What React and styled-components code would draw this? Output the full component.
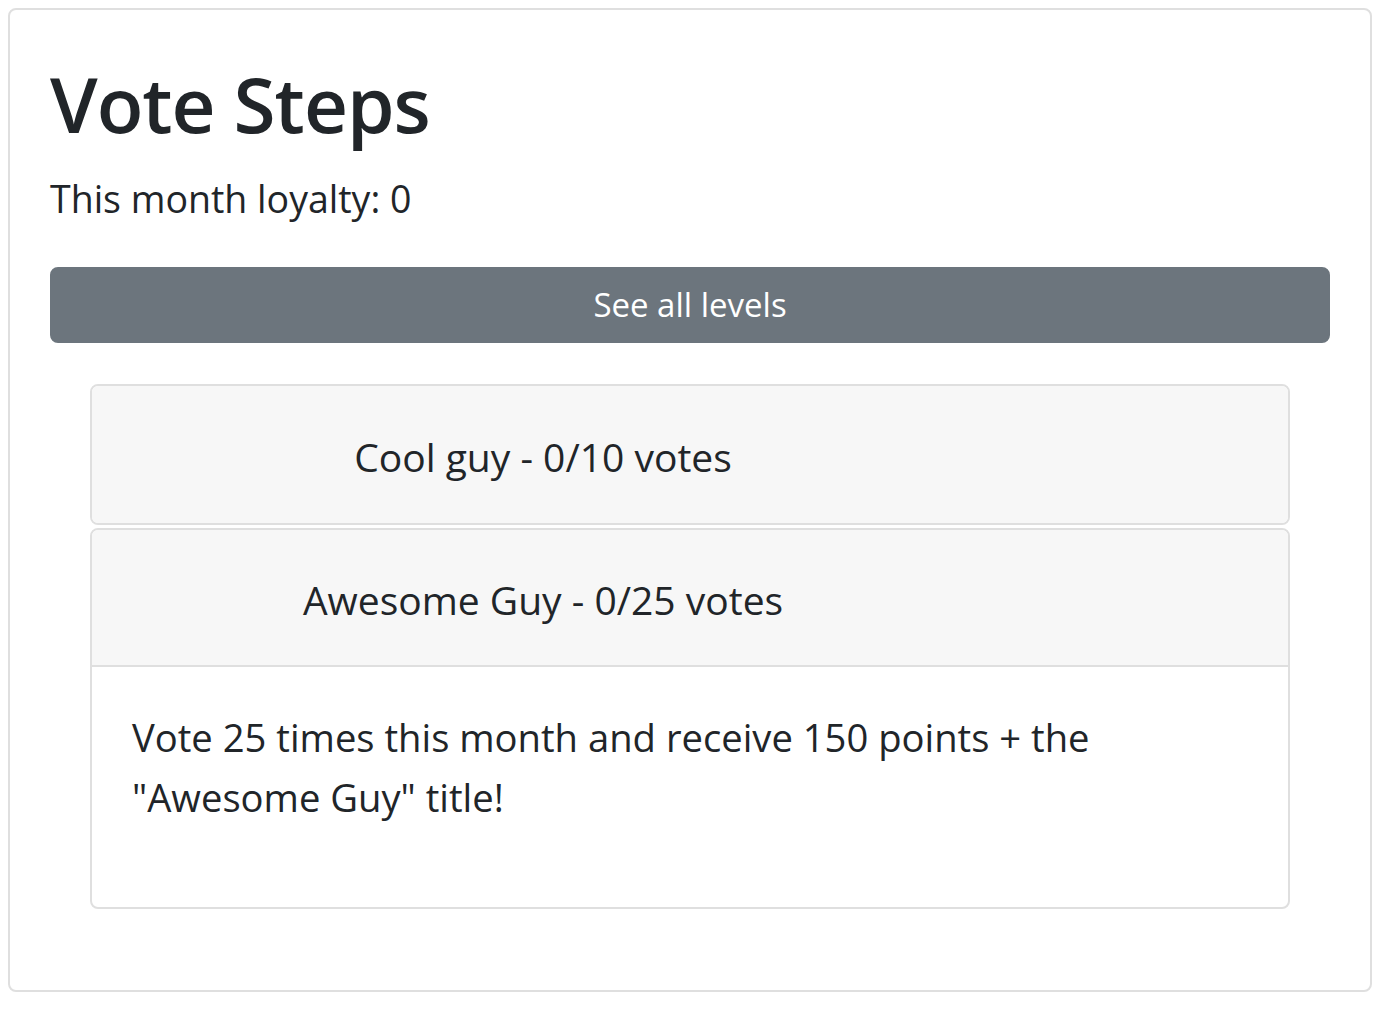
import React from "react"
import styled, { createGlobalStyle } from "styled-components"

const GlobalStyle = createGlobalStyle`
  * { box-sizing: border-box; }
  body {
    margin: 0;
    padding: 8px;
    background: #fff;
    color: #212529;
    font-family: "Open Sans", "Noto Sans", sans-serif;
  }
`

const Card = styled.div`
  width: 1364px;
  border: 2px solid #dfdfdf;
  border-radius: 8px;
  padding: 40px 40px 41px;
  background: #fff;
`

const Title = styled.h1`
  margin: 5px 0 24px;
  font-size: 76.5px;
  font-weight: 600;
  line-height: 96px;
  letter-spacing: -1px;
`

const Loyalty = styled.p`
  margin: 0 0 44px;
  font-size: 37.5px;
  line-height: 48px;
`

const LevelsButton = styled.button`
  display: block;
  width: 100%;
  height: 76px;
  border: 2px solid #6c757d;
  border-radius: 8px;
  background: #6c757d;
  color: #fff;
  font-family: inherit;
  font-size: 33px;
  line-height: 48px;
  cursor: pointer;
`

const Accordion = styled.div`
  margin: 41px 40px 40px;
  display: flex;
  flex-direction: column;
  gap: 3px;
`

const Level = styled.div`
  border: 2px solid #dfdfdf;
  border-radius: 8px;
  overflow: hidden;
`

const LevelHeader = styled.div`
  height: 137px;
  display: flex;
  align-items: center;
  padding: 0 40px;
  background: #f7f7f7;
  border-bottom: ${p => (p.$open ? "2px solid #dfdfdf" : "0")};
`

const LevelName = styled.span`
  width: 822px;
  text-align: center;
  font-size: 39px;
  line-height: 60px;
  padding-top: 4px;
`

const LevelBody = styled.div`
  padding: 40px;
`

const Description = styled.p`
  margin: 0 0 40px;
  font-size: 38.2px;
  line-height: 60px;
  max-width: 1000px;
`

const levels = [
  { name: "Cool guy", votes: 10 },
  {
    name: "Awesome Guy",
    votes: 25,
    open: true,
    text: 'Vote 25 times this month and receive 150 points + the "Awesome Guy" title!',
  },
]

export default function App() {
  return (
    <>
      <GlobalStyle />
      <Card>
        <Title>Vote Steps</Title>
        <Loyalty>This month loyalty: 0</Loyalty>
        <LevelsButton>See all levels</LevelsButton>
        <Accordion>
          {levels.map(level => (
            <Level key={level.name}>
              <LevelHeader $open={level.open}>
                <LevelName>{`${level.name} - 0/${level.votes} votes`}</LevelName>
              </LevelHeader>
              {level.open && (
                <LevelBody>
                  <Description>{level.text}</Description>
                </LevelBody>
              )}
            </Level>
          ))}
        </Accordion>
      </Card>
    </>
  )
}
